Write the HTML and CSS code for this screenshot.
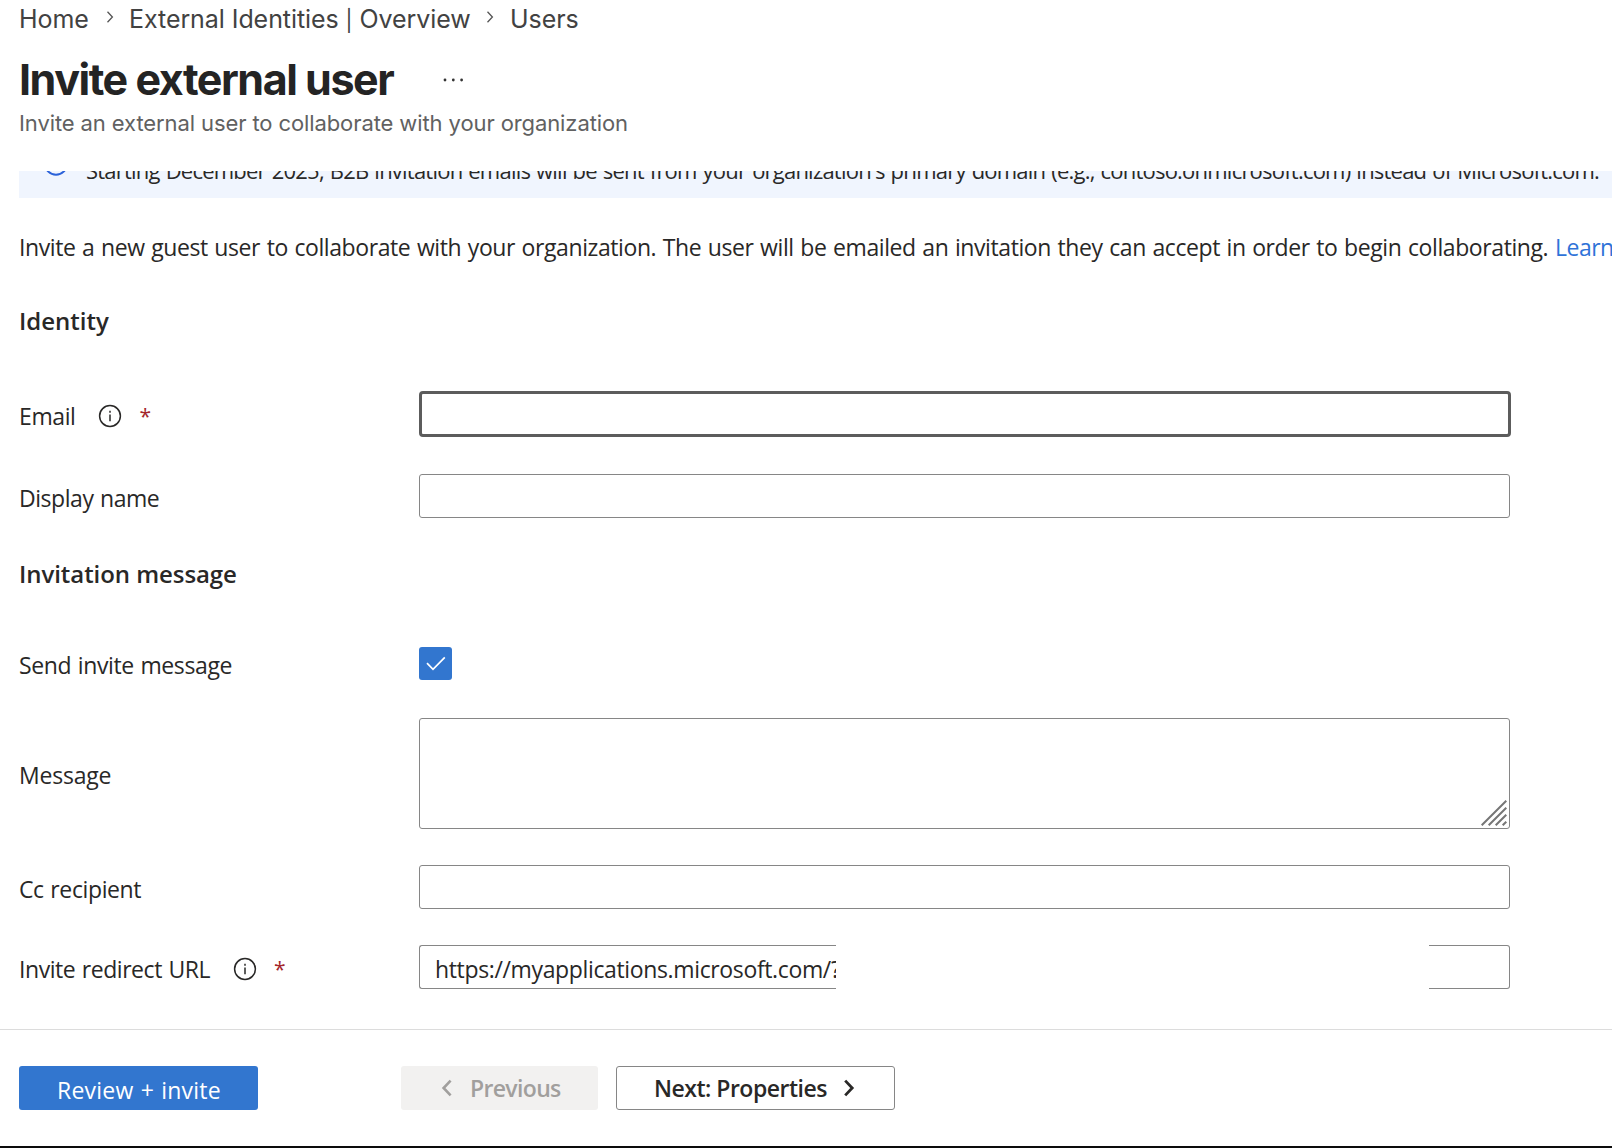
FILE: index.html
```html
<!DOCTYPE html>
<html lang="en">
<head>
<meta charset="utf-8">
<title>Invite external user</title>
<link rel="stylesheet" href="styles.css">
</head>
<body>
<div class="page">
  <header class="header">
    <nav class="breadcrumb">
      <span class="crumb crumb-home">Home</span>
      <svg class="crumb-sep" width="8" height="12" viewBox="0 0 8 12"><path d="M1.5 .8 6.4 6 1.5 11.2"/></svg>
      <span class="crumb crumb-overview">External Identities <span class="pipe">|</span> Overview</span>
      <svg class="crumb-sep" width="8" height="12" viewBox="0 0 8 12"><path d="M1.5 .8 6.4 6 1.5 11.2"/></svg>
      <span class="crumb crumb-users">Users</span>
    </nav>
    <div class="title-row">
      <h1 class="title">Invite external user</h1>
      <svg class="more" width="22" height="4" viewBox="0 0 22 4"><circle cx="2" cy="2" r="1.4"/><circle cx="10.3" cy="2" r="1.4"/><circle cx="18.6" cy="2" r="1.4"/></svg>
    </div>
    <p class="subtitle">Invite an external user to collaborate with your organization</p>
  </header>

  <main class="content">
    <div class="banner">
      <svg class="banner-icon" width="24" height="24" viewBox="0 0 24 24"><circle cx="12" cy="12" r="10.8"/><path d="M12 10.5v6M12 7v1.6"/></svg>
      <span class="banner-text">Starting December 2025, B2B invitation emails will be sent from your organization's primary domain (e.g., contoso.onmicrosoft.com) instead of Microsoft.com.</span>
    </div>
    <p class="intro"><span class="intro-text">Invite a new guest user to collaborate with your organization. The user will be emailed an invitation they can accept in order to begin collaborating.</span><a class="link">Learn</a></p>

    <h2 class="section section-identity">Identity</h2>
    <div class="row row-email">
      <label class="label"><span class="label-email">Email</span>
        <svg class="info" width="24" height="24" viewBox="0 0 24 24"><circle cx="12" cy="12" r="10.4"/><path d="M12 10.6v6.6M12 6.8v1.9"/></svg>
        <span class="required">*</span></label>
      <input class="field field-focus" type="text">
    </div>
    <div class="row row-name">
      <label class="label"><span class="label-name">Display name</span></label>
      <input class="field" type="text">
    </div>

    <h2 class="section section-message">Invitation message</h2>
    <div class="row row-send">
      <label class="label"><span class="label-send">Send invite message</span></label>
      <span class="checkbox"><svg width="33" height="33" viewBox="0 0 33 33"><path d="M8 16.2 14 22.3 25.8 10.3"/></svg></span>
    </div>
    <div class="row row-message">
      <label class="label"><span class="label-message">Message</span></label>
      <div class="field area"><svg width="26" height="26" viewBox="0 0 26 26"><path d="M.7 25.3 25.3.7M7.7 25.3 25.3 7.7M14.7 25.3 25.3 14.7M21.7 25.3l3.6-3.6"/></svg></div>
    </div>
    <div class="row row-cc">
      <label class="label"><span class="label-cc">Cc recipient</span></label>
      <input class="field" type="text">
    </div>
    <div class="row row-url">
      <label class="label"><span class="label-url">Invite redirect URL</span>
        <svg class="info" width="24" height="24" viewBox="0 0 24 24"><circle cx="12" cy="12" r="10.4"/><path d="M12 10.6v6.6M12 6.8v1.9"/></svg>
        <span class="required">*</span></label>
      <div class="split">
        <div class="split-start"><span class="url">https://myapplications.microsoft.com/?</span></div>
        <div class="split-end"></div>
      </div>
    </div>
  </main>

  <footer class="footer">
    <button class="btn btn-primary"><span class="btn-review">Review + invite</span></button>
    <button class="btn btn-disabled"><svg width="12" height="18" viewBox="0 0 12 18"><path d="M9.6 1.6 2.6 9l7 7.4"/></svg><span class="btn-prev">Previous</span></button>
    <button class="btn btn-outline"><span class="btn-next">Next: Properties</span><svg width="12" height="18" viewBox="0 0 12 18"><path d="M2.2 1.6 9.2 9l-7 7.4"/></svg></button>
  </footer>
</div>
</body>
</html>
```
FILE: styles.css
```css
* { box-sizing: border-box; }
body {
  margin: 0;
  background: #fff;
  color: #292827;
  font-family: "Open Sans", "Noto Sans", sans-serif;
  font-size: 23px;
}
h1, h2, p { margin: 0; }
svg { display: block; flex: none; fill: none; }
.page {
  width: 1612px;
  height: 1148px;
  display: flex;
  flex-direction: column;
  overflow: hidden;
  border-bottom: 2px solid #0c0c0c;
  white-space: nowrap;
}

.header { height: 171px; padding-left: 19px; font-family: Inter, sans-serif; }
.breadcrumb { display: flex; height: 38px; font-size: 25px; line-height: 38px; letter-spacing: -.07px; color: #424242; }
.crumb-home { width: 87px; }
.crumb-overview { width: 357px; margin-left: 15px; }
.crumb-users { margin-left: 16px; }
.crumb-sep { margin-top: 11px; stroke: #555; stroke-width: 1.3; }
.pipe { font-size: 21px; }
.title-row { display: flex; align-items: center; height: 64px; margin-top: 10px; }
.title { width: 424px; margin-top: -2px; font-size: 43px; font-weight: 700; line-height: 64px; letter-spacing: -1.45px; color: #242424; }
.more { fill: #333; }
.subtitle { margin-top: -1px; font-size: 22px; line-height: 24px; letter-spacing: -.1px; color: #616161; }

.content { height: 858px; overflow: hidden; padding-left: 19px; }
.banner {
  display: flex;
  align-items: center;
  height: 64px;
  margin-top: -37px;
  padding: 0 0 4px 25px;
  background: #f0f5fe;
}
.banner-icon { stroke: #2b62d9; stroke-width: 2; }
.banner-text { margin: 11px 0 0 18px; font-size: 22px; line-height: 32px; letter-spacing: -.78px; word-spacing: 1px; }
.intro { display: flex; height: 32px; margin-top: 33px; line-height: 32px; }
.intro-text { flex: none; width: 1536px; letter-spacing: -.41px; word-spacing: 1px; }
.link { color: #2f73d8; letter-spacing: -.5px; }
.section { font-size: 24px; font-weight: 600; line-height: 32px; }
.section-identity { margin-top: 42px; }
.section-message { margin-top: 40px; letter-spacing: -.06px; }

.row { display: grid; grid-template-columns: 400px 1092px; align-items: start; }
.label { display: flex; align-items: center; height: 32px; letter-spacing: -.38px; word-spacing: 1px; }
.label-email { letter-spacing: -.4px; }
.label-name, .label-url { letter-spacing: -.45px; }
.label-message { letter-spacing: -.2px; }
.info { margin-left: 23px; stroke: #292827; stroke-width: 1.5; }
.required { margin-left: 17px; font-size: 21px; color: #a4262c; }
.field { width: 1091px; height: 44px; border: 1px solid #868686; border-radius: 3px; background: #fff; outline: 0; }
.field-focus { width: 1092px; height: 46px; border: 3px solid #5c5c5c; border-radius: 4px; }
.row-email { height: 46px; margin-top: 54px; }
.row-email .label { margin-top: 9px; }
.row-name { height: 44px; margin-top: 37px; }
.row-name .label { margin-top: 8px; }
.row-send { height: 33px; margin-top: 57px; }
.row-send .label { margin-top: 2px; }
.checkbox { width: 33px; height: 33px; border-radius: 3px; background: #3276cf; stroke: #fff; stroke-width: 1.7; }
.row-message { height: 111px; margin-top: 38px; }
.row-message .label { margin-top: 41px; }
.area { display: flex; align-items: flex-end; justify-content: flex-end; height: 111px; padding: 0 2px 2px 0; stroke: #767676; stroke-width: 2; }
.row-cc { height: 44px; margin-top: 36px; }
.row-cc .label { margin-top: 8px; }
.row-url { height: 44px; margin-top: 36px; }
.row-url .label { margin-top: 8px; }
.split { display: flex; justify-content: space-between; width: 1091px; height: 44px; }
.split-start { width: 417px; padding-left: 15px; overflow: hidden; border: 1px solid #868686; border-right: 0; border-radius: 3px 0 0 3px; line-height: 46px; }
.url { letter-spacing: -.36px; }
.split-end { width: 81px; border: 1px solid #868686; border-left: 0; border-radius: 0 3px 3px 0; }

.footer { display: flex; height: 117px; padding: 36px 0 0 19px; border-top: 1px solid #dcdcdc; }
.btn { display: flex; align-items: center; height: 44px; padding: 0; border: 0; border-radius: 3px; font: inherit; color: inherit; }
.btn span { line-height: 32px; }
.btn-primary { width: 239px; padding: 3px 0 0 38px; background: #3276cf; color: #fff; font-weight: 500; }
.btn-review { letter-spacing: .22px; word-spacing: 1px; }
.btn-disabled { width: 197px; margin-left: 143px; padding-left: 40px; background: #f2f1f0; color: #a19f9d; }
.btn-disabled svg { margin-right: 17px; stroke: #a19f9d; stroke-width: 2.6; }
.btn-outline { width: 279px; margin-left: 18px; padding-left: 37px; border: 1px solid #868686; background: #fff; }
.btn-outline svg { margin-left: 16px; stroke: #292827; stroke-width: 2.8; }
.btn-disabled, .btn-outline { font-weight: 600; letter-spacing: -.5px; }
.btn-prev { letter-spacing: -.65px; }
```
